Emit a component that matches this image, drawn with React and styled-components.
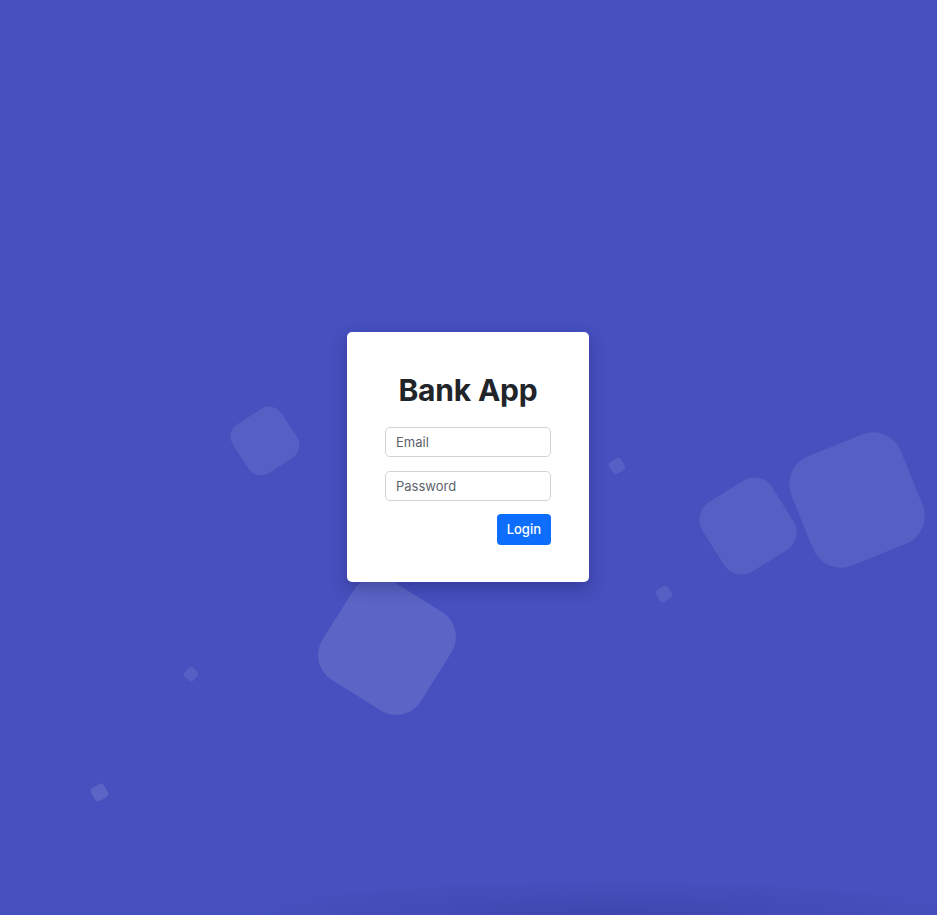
import styled, { createGlobalStyle } from "styled-components";

const GlobalStyle = createGlobalStyle`
    html, body {
        margin: 0;
        padding: 0;
    }
    body {
        font-family: Inter, "Noto Sans", "Liberation Sans", sans-serif;
        background: #4650be;
    }
    * {
        box-sizing: border-box;
    }
`;

const Page = styled.div`
    position: relative;
    height: 915px;
    overflow: hidden;
    display: flex;
    align-items: center;
    justify-content: center;
    background: #4650be;
    &::after {
        content: "";
        position: absolute;
        left: 0;
        right: 0;
        bottom: 0;
        height: 50px;
        background: radial-gradient(ellipse 55% 100% at 65% 100%, rgba(30, 34, 110, 0.2), rgba(30, 34, 110, 0) 70%);
        pointer-events: none;
    }
`;

const Shape = styled.div`
    position: absolute;
    width: ${props => props.size}px;
    height: ${props => props.size}px;
    left: ${props => props.x - props.size / 2}px;
    top: ${props => props.y - props.size / 2}px;
    border-radius: ${props => Math.round(props.size * 0.25)}px;
    background: rgba(255, 255, 255, ${props => props.alpha || 0.09});
    transform: rotate(${props => props.rotate}deg);
`;

const Card = styled.div`
    position: relative;
    z-index: 1;
    width: 242px;
    margin: -2px 0 0 -1px;
    padding: 38px 38px 37px;
    background: #ffffff;
    border-radius: 5px;
    box-shadow: 0 6px 16px rgba(20, 24, 90, 0.35);
`;

const Title = styled.h1`
    margin: 0 0 19px;
    padding-top: 2px;
    text-align: center;
    font-size: 30px;
    line-height: 36px;
    font-weight: 700;
    color: #212529;
    letter-spacing: -0.2px;
`;

const Form = styled.form`
    display: flex;
    flex-direction: column;
    gap: 14px;
`;

const Input = styled.input`
    width: 100%;
    height: 30px;
    padding: 0 10px;
    font-family: inherit;
    font-size: 13px;
    color: #212529;
    border: 1px solid #ced4da;
    border-radius: 5px;
    background: #fff;
    outline: none;
    &::placeholder {
        color: #5c636a;
    }
`;

const Actions = styled.div`
    display: flex;
    justify-content: flex-end;
    margin-top: -1px;
`;

const Button = styled.button`
    height: 31px;
    padding: 0 10px;
    font-family: inherit;
    font-size: 13px;
    font-weight: 500;
    color: #fff;
    background: #0d6efd;
    border: none;
    border-radius: 4px;
    cursor: pointer;
`;

const shapes = [
    { x: 265, y: 441, size: 58, rotate: -33 },
    { x: 387, y: 646, size: 116, rotate: 32, alpha: 0.12 },
    { x: 748, y: 526, size: 82, rotate: -32 },
    { x: 857, y: 500, size: 118, rotate: -22 },
    { x: 617, y: 466, size: 14, rotate: -30 },
    { x: 664, y: 594, size: 14, rotate: -30 },
    { x: 191, y: 674, size: 12, rotate: 40 },
    { x: 99, y: 792, size: 15, rotate: -30, alpha: 0.12 },
];

const App = () => {
    return (
        <>
            <GlobalStyle />
            <Page>
                {shapes.map((s, i) => (
                    <Shape key={i} {...s} />
                ))}
                <Card>
                    <Title>Bank App</Title>
                    <Form onSubmit={e => e.preventDefault()}>
                        <Input type="email" placeholder="Email" />
                        <Input type="password" placeholder="Password" />
                        <Actions>
                            <Button type="submit">Login</Button>
                        </Actions>
                    </Form>
                </Card>
            </Page>
        </>
    );
};

export default App;
